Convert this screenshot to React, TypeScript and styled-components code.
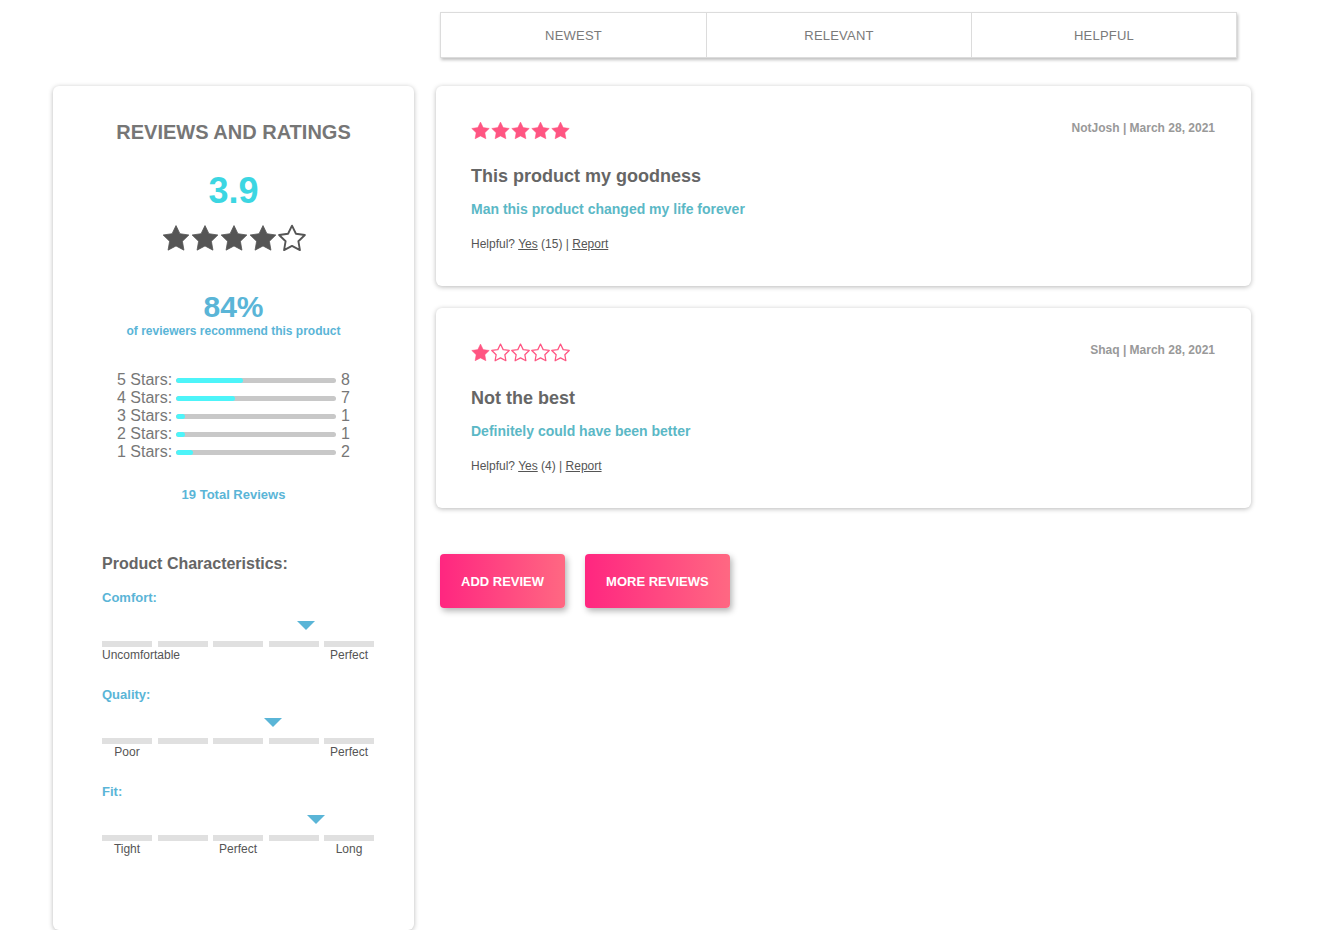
import styled, { createGlobalStyle } from 'styled-components';

const GlobalStyle = createGlobalStyle`
  * { box-sizing: border-box; }
  body {
    margin: 0;
    background: #fff;
    font-family: "Liberation Sans", Arial, sans-serif;
  }
`;

const BLUE = '#5ab5d7';
const TEAL = '#5bb8c6';
const PINK = '#ff5582';

// Data
const breakdown = [
  { stars: 5, count: 8 },
  { stars: 4, count: 7 },
  { stars: 3, count: 1 },
  { stars: 2, count: 1 },
  { stars: 1, count: 2 },
];
const total = 19;

const characteristics = [
  { name: 'Comfort', pos: 71.7, labels: ['Uncomfortable', '', '', '', 'Perfect'] },
  { name: 'Quality', pos: 59.6, labels: ['Poor', '', '', '', 'Perfect'] },
  { name: 'Fit', pos: 75.4, labels: ['Tight', '', 'Perfect', '', 'Long'] },
];

const reviews = [
  {
    rating: 5,
    user: 'NotJosh',
    date: 'March 28, 2021',
    summary: 'This product my goodness',
    body: 'Man this product changed my life forever',
    helpful: 15,
  },
  {
    rating: 1,
    user: 'Shaq',
    date: 'March 28, 2021',
    summary: 'Not the best',
    body: 'Definitely could have been better',
    helpful: 4,
  },
];

// Layout
const Page = styled.div`
  display: grid;
  grid-template-columns: 361px 815px;
  grid-template-rows: 46px auto;
  column-gap: 22px;
  row-gap: 28px;
  padding: 12px 0 0 53px;
`;

const Tabs = styled.div`
  grid-column: 2;
  grid-row: 1;
  margin-left: 4px;
  width: 797px;
  display: grid;
  grid-template-columns: repeat(3, 1fr);
  border: 1px solid #dcdcdc;
  background: #fff;
  box-shadow: 1px 2px 3px rgba(0, 0, 0, 0.25);
`;

const Tab = styled.button`
  border: none;
  border-left: 1px solid #dcdcdc;
  background: #fff;
  font-family: inherit;
  font-size: 13px;
  color: #7a7a7a;
  letter-spacing: 0.2px;
  &:first-child { border-left: none; }
`;

const Panel = styled.section`
  grid-column: 1;
  grid-row: 2;
  height: 844px;
  padding-top: 34px;
  border-radius: 6px;
  background: #fff;
  box-shadow: 0 1px 5px rgba(0, 0, 0, 0.28);
  display: flex;
  flex-direction: column;
  align-items: center;
`;

const PanelTitle = styled.h2`
  margin: 0;
  font-size: 20px;
  line-height: 24px;
  font-weight: 700;
  color: #767676;
`;

const Average = styled.div`
  margin-top: 27px;
  font-size: 36px;
  line-height: 40px;
  font-weight: 700;
  color: #3cd6e2;
`;

const StarRow = styled.div<{ $size: number; $gap: number }>`
  display: flex;
  gap: ${(p) => p.$gap}px;
  height: ${(p) => p.$size}px;
  svg { width: ${(p) => p.$size}px; height: ${(p) => p.$size}px; display: block; }
`;

const PanelStars = styled(StarRow)`
  margin-top: 13px;
`;

const Percent = styled.div`
  margin-top: 38px;
  font-size: 30px;
  line-height: 34px;
  font-weight: 700;
  color: ${BLUE};
`;

const Recommend = styled.div`
  font-size: 12px;
  line-height: 14px;
  font-weight: 700;
  color: ${BLUE};
`;

const Breakdown = styled.div`
  margin-top: 33px;
  display: flex;
  flex-direction: column;
`;

const BreakdownRow = styled.div`
  display: flex;
  align-items: center;
  height: 18px;
  font-size: 16px;
  color: #777;
`;

const BarTrack = styled.div`
  width: 160px;
  height: 5px;
  margin: 1px 5px 0 4px;
  border-radius: 3px;
  background: #c8c8c8;
  overflow: hidden;
`;

const BarFill = styled.div`
  height: 100%;
  border-radius: 3px;
  background: #4df4f9;
`;

const TotalReviews = styled.div`
  margin-top: 26px;
  font-size: 13px;
  line-height: 16px;
  font-weight: 700;
  color: ${BLUE};
`;

const Characteristics = styled.div`
  align-self: flex-start;
  margin: 51px 0 0 49px;
  width: 272px;
`;

const CharHeading = styled.h3`
  margin: 0;
  font-size: 16px;
  line-height: 20px;
  font-weight: 700;
  color: #666;
`;

const CharBlock = styled.div`
  margin-top: 16px;
  & + & { margin-top: 25px; }
`;

const CharName = styled.div`
  font-size: 13px;
  line-height: 16px;
  font-weight: 700;
  color: ${BLUE};
`;

const Marker = styled.div`
  margin-top: 15px;
  width: 0;
  height: 0;
  border-left: 9.5px solid transparent;
  border-right: 9.5px solid transparent;
  border-top: 9px solid ${BLUE};
`;

const Segments = styled.div`
  margin-top: 11px;
  display: grid;
  grid-template-columns: repeat(5, minmax(0, 1fr));
  column-gap: 5.5px;
`;

const Segment = styled.div`
  height: 6px;
  background: #e0e0e0;
`;

const SegmentLabel = styled.div`
  margin-top: 1px;
  font-size: 12px;
  line-height: 14px;
  color: #555;
  text-align: center;
  white-space: nowrap;
`;

const ReviewColumn = styled.div`
  grid-column: 2;
  grid-row: 2;
  display: flex;
  flex-direction: column;
`;

const ReviewCard = styled.article`
  height: 200px;
  padding: 35px 36px 0 35px;
  margin-bottom: 22px;
  border-radius: 6px;
  background: #fff;
  box-shadow: 0 1px 5px rgba(0, 0, 0, 0.28);
`;

const CardHeader = styled.div`
  display: flex;
  justify-content: space-between;
  align-items: flex-start;
`;

const Byline = styled.div`
  font-size: 12px;
  line-height: 14px;
  font-weight: 700;
  color: #999;
`;

const Summary = styled.h4`
  margin: 25px 0 0;
  font-size: 18px;
  line-height: 22px;
  font-weight: 700;
  color: #666;
`;

const Body = styled.p`
  margin: 14px 0 0;
  font-size: 14px;
  line-height: 17px;
  font-weight: 700;
  color: ${TEAL};
`;

const Helpful = styled.div`
  margin-top: 19px;
  font-size: 12px;
  line-height: 14px;
  color: #555;
`;

const LinkText = styled.span`
  text-decoration: underline;
`;

const Actions = styled.div`
  margin: 24px 0 0 4px;
  display: flex;
  gap: 20px;
`;

const ActionButton = styled.button`
  height: 54px;
  padding: 0 21px;
  border: none;
  border-radius: 4px;
  background: linear-gradient(90deg, #ff2680 0%, #ff6882 100%);
  box-shadow: 2px 3px 6px rgba(0, 0, 0, 0.3);
  font-family: inherit;
  font-size: 13px;
  font-weight: 700;
  color: #fff;
`;

const STAR_PATH =
  'M12 2.2l2.95 6.1 6.7.95-4.85 4.7 1.15 6.65L12 17.45 6.05 20.6l1.15-6.65L2.35 9.25l6.7-.95z';

function Star({ filled, color }: { filled: boolean; color: string }) {
  return (
    <svg viewBox="1.5 1.5 21 20">
      <path
        d={STAR_PATH}
        fill={filled ? color : 'none'}
        stroke={color}
        strokeWidth={filled ? 0.6 : 1.4}
        strokeLinejoin="round"
      />
    </svg>
  );
}

function Stars({ value, color, size, gap }: { value: number; color: string; size: number; gap: number }) {
  return (
    <StarRow $size={size} $gap={gap}>
      {[1, 2, 3, 4, 5].map((i) => (
        <Star key={i} filled={i <= Math.round(value)} color={color} />
      ))}
    </StarRow>
  );
}

export default function App() {
  return (
    <>
      <GlobalStyle />
      <Page>
        <Tabs>
          <Tab>NEWEST</Tab>
          <Tab>RELEVANT</Tab>
          <Tab>HELPFUL</Tab>
        </Tabs>

        <Panel>
          <PanelTitle>REVIEWS AND RATINGS</PanelTitle>
          <Average>3.9</Average>
          <PanelStars $size={28} $gap={1}>
            {[1, 2, 3, 4, 5].map((i) => (
              <Star key={i} filled={i <= 4} color="#555" />
            ))}
          </PanelStars>
          <Percent>84%</Percent>
          <Recommend>of reviewers recommend this product</Recommend>

          <Breakdown>
            {breakdown.map((row) => (
              <BreakdownRow key={row.stars}>
                {row.stars} Stars:
                <BarTrack>
                  <BarFill style={{ width: `${(row.count / total) * 100}%` }} />
                </BarTrack>
                {row.count}
              </BreakdownRow>
            ))}
          </Breakdown>
          <TotalReviews>{total} Total Reviews</TotalReviews>

          <Characteristics>
            <CharHeading>Product Characteristics:</CharHeading>
            {characteristics.map((c) => (
              <CharBlock key={c.name}>
                <CharName>{c.name}:</CharName>
                <Marker style={{ marginLeft: `${c.pos}%` }} />
                <Segments>
                  {c.labels.map((_, i) => (
                    <Segment key={i} />
                  ))}
                  {c.labels.map((label, i) => (
                    <SegmentLabel key={`l${i}`}>{label}</SegmentLabel>
                  ))}
                </Segments>
              </CharBlock>
            ))}
          </Characteristics>
        </Panel>

        <ReviewColumn>
          {reviews.map((r) => (
            <ReviewCard key={r.user}>
              <CardHeader>
                <Stars value={r.rating} color={PINK} size={19} gap={1} />
                <Byline>
                  {r.user} | {r.date}
                </Byline>
              </CardHeader>
              <Summary>{r.summary}</Summary>
              <Body>{r.body}</Body>
              <Helpful>
                Helpful? <LinkText>Yes</LinkText> ({r.helpful}) | <LinkText>Report</LinkText>
              </Helpful>
            </ReviewCard>
          ))}
          <Actions>
            <ActionButton>ADD REVIEW</ActionButton>
            <ActionButton>MORE REVIEWS</ActionButton>
          </Actions>
        </ReviewColumn>
      </Page>
    </>
  );
}
